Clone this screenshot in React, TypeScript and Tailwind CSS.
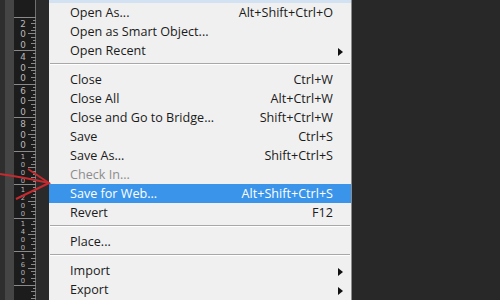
const items = [
  { label: 'Open As...', shortcut: 'Alt+Shift+Ctrl+O' },
  { label: 'Open as Smart Object...' },
  { label: 'Open Recent', sub: true },
  { sep: true },
  { label: 'Close', shortcut: 'Ctrl+W' },
  { label: 'Close All', shortcut: 'Alt+Ctrl+W' },
  { label: 'Close and Go to Bridge...', shortcut: 'Shift+Ctrl+W' },
  { label: 'Save', shortcut: 'Ctrl+S' },
  { label: 'Save As...', shortcut: 'Shift+Ctrl+S' },
  { label: 'Check In...', disabled: true },
  { label: 'Save for Web...', shortcut: 'Alt+Shift+Ctrl+S', active: true },
  { label: 'Revert', shortcut: 'F12' },
  { sep: true },
  { label: 'Place...' },
  { sep: true },
  { label: 'Import', sub: true },
  { label: 'Export', sub: true },
];

const labels = ['200', '400', '600', '800', '1000', '1200', '1400', '1600'];

const Ruler = () => {
  const ticks = [];
  for (let i = 0; i * 3.35 < 300; i++) {
    const y = Math.round(i * 3.35 + 16.5) + 0.5;
    const len = i % 10 === 0 ? 22 : i % 5 === 0 ? 8 : i % 2 === 0 ? 5 : 3;
    ticks.push(<line key={i} x1={22 - len} x2={22} y1={y} y2={y} stroke="#8a8a8a" strokeWidth="1" />);
  }
  return (
    <svg width="22" height="300" className="block">
      <rect width="22" height="300" fill="#1c1c1c" />
      <line x1="21.5" x2="21.5" y1="0" y2="300" stroke="#6f6f6f" />
      {ticks}
      {labels.map((n, k) => {
        const long = n.length > 3;
        const pitch = long ? 8 : 10.5;
        return n.split('').map((d, j) => {
          const y = 16.5 + k * 33.5 + (long ? 8 : 10) + j * pitch;
          if (y > 298) return null;
          return (
            <text
              key={`${k}-${j}`}
              x="9"
              y={y}
              fill="#b8b8b8"
              fontSize={long ? 6.8 : 8.8}
              fontFamily="'DejaVu Sans', sans-serif"
              textAnchor="middle"
            >
              {d}
            </text>
          );
        });
      })}
    </svg>
  );
};

const App = () => {
  return (
    <div className="relative flex w-[500px] h-[300px] overflow-hidden bg-[#282828] font-['Open_Sans',sans-serif]">
      {/* left panel edge */}
      <div className="flex w-[14px] h-full">
        <div className="w-[5px] bg-[#2e2e2e]" />
        <div className="w-[9px] bg-[#454545]" />
      </div>
      <Ruler />
      <div className="w-[13px] bg-[#2a2a2a]" />

      {/* File menu */}
      <div className="w-[303px] h-full bg-[#f0f0f0] border-r border-[#8c8c8c] flex flex-col text-[12.6px] text-[#1b1b1b]">
        <div className="h-[3px] bg-[#d3e2f2] shrink-0" />
        {items.map((item, i) =>
          item.sep ? (
            <div key={i} className="h-[10px] shrink-0 pt-[3px] px-[1px]">
              <div className="border-t border-[#a8a8a8] border-b border-b-white" />
            </div>
          ) : (
            <div
              key={i}
              className={`h-[19px] shrink-0 flex items-center pl-[21px] pt-[2px] ${
                item.active ? 'bg-[#3a94ea] text-white' : item.disabled ? 'text-[#8d8d8d]' : ''
              }`}
            >
              <span className="flex-1 whitespace-nowrap leading-none">{item.label}</span>
              <span className="whitespace-nowrap leading-none">{item.shortcut}</span>
              <span className="w-[18px] h-full flex items-center pl-[5px]">
                {item.sub && (
                  <svg width="5" height="8" viewBox="0 0 5 8">
                    <path d="M0 0 L5 4 L0 8 Z" fill="#111" />
                  </svg>
                )}
              </span>
            </div>
          )
        )}
      </div>

      <div className="flex-1 bg-[#282828]" />

      {/* red annotation arrow */}
      <svg className="absolute left-0 top-0 pointer-events-none" width="60" height="300">
        <path d="M0 174 Q22 177 49 183" stroke="#c62a2e" strokeWidth="2" fill="none" />
        <path d="M28 169 L49 183 L16 199" stroke="#c62a2e" strokeWidth="2" fill="none" />
      </svg>
    </div>
  );
};

export default App;
